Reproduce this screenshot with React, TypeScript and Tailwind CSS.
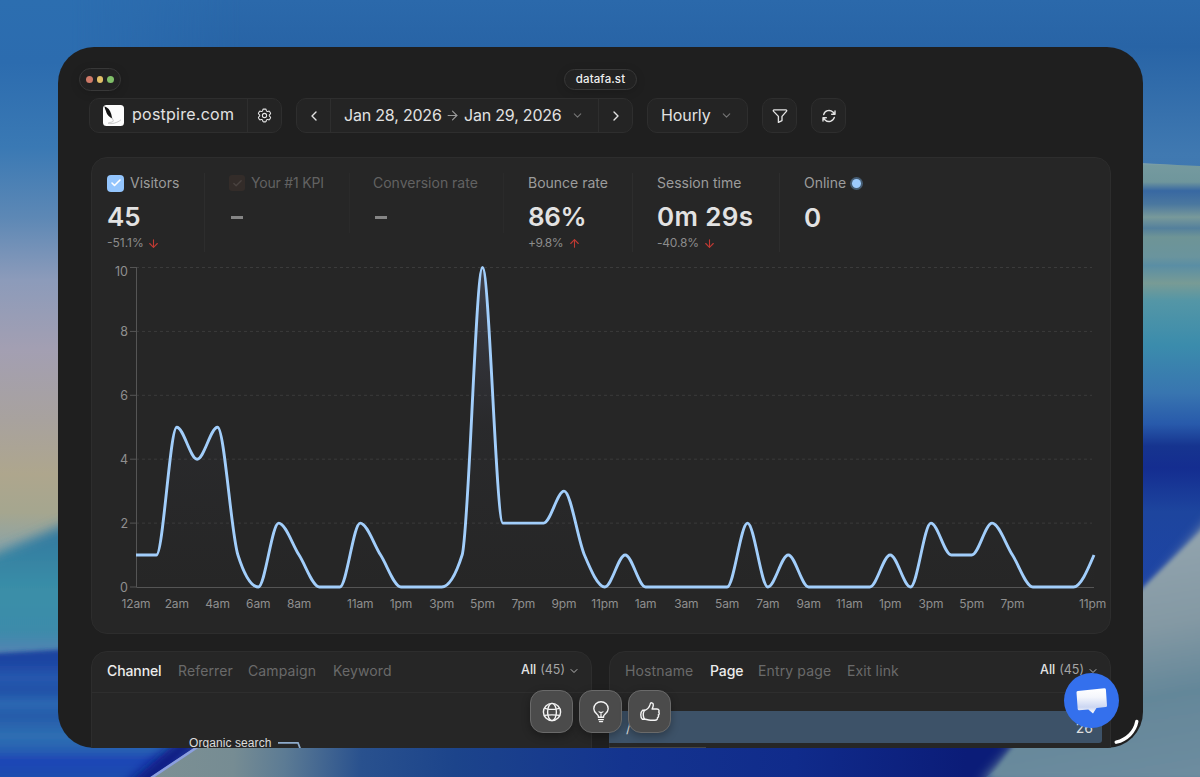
import React from "react";
import { ArrowDown, ArrowRight, ArrowUp, Check, ChevronDown, ChevronLeft, ChevronRight } from "lucide-react";
import { HiOutlineCog6Tooth } from "react-icons/hi2";

const VALUES = [
  1, 1, 5, 4, 5, 1, 0, 2, 1, 0, 0, 2, 1, 0, 0, 0, 1, 10, 2, 2, 2, 3, 1, 0,
  1, 0, 0, 0, 0, 0, 2, 0, 1, 0, 0, 0, 0, 1, 0, 2, 1, 1, 2, 1, 0, 0, 0, 1,
];
const TICKS = [0, 2, 4, 6, 8, 11, 13, 15, 17, 19, 21, 23, 25, 27, 29, 31, 33, 35, 37, 39, 41, 43, 47];

const LEFT = 44;
const RIGHT = 1002;
const BASE = 330;
const UNIT = 31.95;

function hourLabel(i: number) {
  const h = i % 24;
  return `${h % 12 === 0 ? 12 : h % 12}${h < 12 ? "am" : "pm"}`;
}

/** Monotone cubic interpolation through equally spaced points. */
function monotonePath(pts: [number, number][]) {
  const n = pts.length;
  const slope = (i: number) => (pts[i + 1][1] - pts[i][1]) / (pts[i + 1][0] - pts[i][0]);
  const t: number[] = new Array(n).fill(0);
  for (let i = 1; i < n - 1; i++) {
    const a = slope(i - 1);
    const b = slope(i);
    t[i] = (Math.sign(a) + Math.sign(b)) * Math.min(Math.abs(a), Math.abs(b), Math.abs((a + b) / 4)) || 0;
  }
  t[0] = (3 * slope(0) - t[1]) / 2;
  t[n - 1] = (3 * slope(n - 2) - t[n - 2]) / 2;
  let d = `M${pts[0][0]},${pts[0][1]}`;
  for (let i = 0; i < n - 1; i++) {
    const dx = (pts[i + 1][0] - pts[i][0]) / 3;
    d += `C${pts[i][0] + dx},${pts[i][1] + dx * t[i]},${pts[i + 1][0] - dx},${pts[i + 1][1] - dx * t[i + 1]},${pts[i + 1][0]},${pts[i + 1][1]}`;
  }
  return d;
}

const step = (RIGHT - LEFT) / 47;
const points = VALUES.map((v, i) => [LEFT + i * step, BASE - v * UNIT] as [number, number]);
const line = monotonePath(points);

function Wallpaper() {
  return (
    <svg className="absolute inset-0" width="1200" height="777" viewBox="0 0 1200 777">
      <defs>
        <linearGradient id="sky" x1="0" x2="0" y1="0" y2="1">
          <stop offset="0" stopColor="#2b69ab" />
          <stop offset="0.06" stopColor="#2864a6" />
          <stop offset="0.2" stopColor="#4079b1" />
          <stop offset="1" stopColor="#173a90" />
        </linearGradient>
        <linearGradient id="wl" gradientUnits="userSpaceOnUse" x1="0" x2="0" y1="0" y2="777">
          <stop offset="0" stopColor="#2c6eb0" />
          <stop offset="0.08" stopColor="#2c6caf" />
          <stop offset="0.19" stopColor="#3a79b4" />
          <stop offset="0.28" stopColor="#5d88b5" />
          <stop offset="0.36" stopColor="#8c9bba" />
          <stop offset="0.45" stopColor="#a39fb2" />
          <stop offset="0.54" stopColor="#a8a29e" />
          <stop offset="0.61" stopColor="#aea68d" />
          <stop offset="0.66" stopColor="#a5a68f" />
          <stop offset="0.7" stopColor="#8fa4a4" />
        </linearGradient>
        <linearGradient id="fade" gradientUnits="userSpaceOnUse" x1="70" x2="240" y1="0" y2="0">
          <stop offset="0" stopColor="#fff" />
          <stop offset="1" stopColor="#000" />
        </linearGradient>
        <mask id="leftEdge"><rect width="300" height="777" fill="url(#fade)" /></mask>
        <linearGradient id="teal" gradientUnits="userSpaceOnUse" x1="0" x2="0" y1="530" y2="652">
          <stop offset="0" stopColor="#33799f" />
          <stop offset="0.5" stopColor="#3a8fa8" />
          <stop offset="0.85" stopColor="#3c8baa" />
          <stop offset="1" stopColor="#5583b4" />
        </linearGradient>
        <linearGradient id="sea" gradientUnits="userSpaceOnUse" x1="0" x2="0" y1="650" y2="777">
          <stop offset="0" stopColor="#1b45a0" />
          <stop offset="0.08" stopColor="#1c44a2" />
          <stop offset="0.22" stopColor="#2658ae" />
          <stop offset="0.32" stopColor="#2151a8" />
          <stop offset="0.42" stopColor="#2b68b2" />
          <stop offset="0.52" stopColor="#265caa" />
          <stop offset="0.68" stopColor="#2e6fb3" />
          <stop offset="0.78" stopColor="#2861b2" />
          <stop offset="0.88" stopColor="#1d44b6" />
          <stop offset="1" stopColor="#1f50ae" />
        </linearGradient>
        <linearGradient id="wr" gradientUnits="userSpaceOnUse" x1="0" x2="0" y1="160" y2="600">
          <stop offset="0" stopColor="#8fabc0" />
          <stop offset="0.012" stopColor="#759a9f" />
          <stop offset="0.05" stopColor="#6f969c" />
          <stop offset="0.07" stopColor="#3868a2" />
          <stop offset="0.1" stopColor="#4a779f" />
          <stop offset="0.13" stopColor="#78999a" />
          <stop offset="0.155" stopColor="#54809c" />
          <stop offset="0.175" stopColor="#6e9496" />
          <stop offset="0.22" stopColor="#6a949d" />
          <stop offset="0.24" stopColor="#5a8ea4" />
          <stop offset="0.28" stopColor="#789b95" />
          <stop offset="0.32" stopColor="#5496a6" />
          <stop offset="0.42" stopColor="#3b8cac" />
          <stop offset="0.53" stopColor="#3875b0" />
          <stop offset="0.6" stopColor="#285aab" />
          <stop offset="0.65" stopColor="#16348f" />
          <stop offset="0.7" stopColor="#142d90" />
          <stop offset="0.8" stopColor="#1d459e" />
          <stop offset="1" stopColor="#1e44a6" />
        </linearGradient>
        <linearGradient id="slate" gradientUnits="userSpaceOnUse" x1="1120" x2="1160" y1="550" y2="777">
          <stop offset="0" stopColor="#91a3ad" />
          <stop offset="0.35" stopColor="#8499a4" />
          <stop offset="0.65" stopColor="#648799" />
          <stop offset="1" stopColor="#6d8c9f" />
        </linearGradient>
        <linearGradient id="floor" gradientUnits="userSpaceOnUse" x1="150" x2="1000" y1="0" y2="40">
          <stop offset="0" stopColor="#7f9294" />
          <stop offset="0.14" stopColor="#768c93" />
          <stop offset="0.2" stopColor="#5c7b94" />
          <stop offset="0.29" stopColor="#29518e" />
          <stop offset="0.4" stopColor="#1c448b" />
          <stop offset="0.6" stopColor="#14348f" />
          <stop offset="0.8" stopColor="#102b8b" />
          <stop offset="1" stopColor="#0b1c78" />
        </linearGradient>
        <filter id="b2" x="-20%" y="-20%" width="140%" height="140%"><feGaussianBlur stdDeviation="2" /></filter>
        <filter id="b6" x="-20%" y="-30%" width="140%" height="160%"><feGaussianBlur stdDeviation="6" /></filter>
      </defs>
      <rect width="1200" height="777" fill="url(#sky)" />
      <rect width="300" height="777" fill="url(#wl)" mask="url(#leftEdge)" />
      <path d="M-20 560 L90 514 V660 H-20Z" fill="url(#teal)" filter="url(#b6)" />
      <path d="M-20 654 L90 648 H250 V800 H-20Z" fill="url(#sea)" filter="url(#b2)" />
      <path d="M140 795 L215 730 L185 735 L115 795Z" fill="#08187f" filter="url(#b6)" />
      <path d="M145 781 L206 740 H1040 L980 781Z" fill="url(#floor)" />
      <path d="M148 780 L205 742" stroke="#8b9fe0" strokeWidth="2.6" />
      <path d="M1100 162 C1140 162 1170 165 1200 166 V600 H1100Z" fill="url(#wr)" />
      <path d="M1225 502 L980 784 H1225Z" fill="url(#slate)" filter="url(#b6)" />
      <path d="M1225 508 L1110 620 L990 777 H1225Z" fill="url(#slate)" filter="url(#b2)" />
    </svg>
  );
}

function Favicon() {
  return (
    <svg width="21" height="21" viewBox="0 0 21 21">
      <rect width="21" height="21" rx="3.5" fill="#fcfcfc" />
      <path d="M1.4 1.2C5 2.4 7 5 8.2 9L9.2 13.6C6.3 12 4 10 3.2 7C3.4 6.4 1.8 4 1.4 1.2Z" fill="#111" />
      <path d="M9 12.5L10.3 15.8C10.4 17.8 6 16.9 5.2 18.2C8 19.6 14.6 17.7 18 14.8" fill="none" stroke="#aaa" strokeWidth=".6" />
    </svg>
  );
}

function FunnelIcon() {
  return (
    <svg width="16" height="16" viewBox="0 0 16 16" fill="none" stroke="currentColor" strokeWidth="1.35" strokeLinejoin="round">
      <path d="M2.2 1.8H13.8C14.8 1.8 15 2.7 14.4 3.4L10 8.4V12.6L6.4 14.4V8.4L1.6 3.4C1 2.7 1.2 1.8 2.2 1.8Z" />
    </svg>
  );
}

function RefreshIcon() {
  return (
    <svg width="16" height="16" viewBox="0 0 24 24" fill="none" stroke="currentColor" strokeWidth="2.1" strokeLinecap="round" strokeLinejoin="round">
      <path d="M16.023 9.348h4.992V4.356M2.985 19.644v-4.992h4.992M2.985 14.652l3.181 3.183a8.25 8.25 0 0 0 13.803-3.7M4.031 9.865a8.25 8.25 0 0 1 13.803-3.7l3.181 3.182" />
    </svg>
  );
}

function GlobeIcon() {
  return (
    <svg width="20" height="20" viewBox="0 0 20 20" fill="none" stroke="#f4f4f4" strokeWidth="1.4">
      <circle cx="10" cy="10" r="8.6" />
      <ellipse cx="10" cy="10" rx="4.4" ry="8.6" />
      <path d="M2.6 6C5 7.8 15 7.8 17.4 6M2.2 13.4C5 12.6 15 12.6 17.8 13.4" strokeWidth="1.3" />
    </svg>
  );
}

function BulbIcon() {
  return (
    <svg width="18" height="22" viewBox="0 0 18 22" fill="none" stroke="#f4f4f4" strokeWidth="1.4" strokeLinecap="round" strokeLinejoin="round">
      <path d="M6.4 16.3V15.1C6.2 13.3 1.8 12 1.8 7.8A7.2 7 0 0 1 16.2 7.8C16.2 12 11.8 13.3 11.6 15.1V16.3Z" />
      <path d="M9 16V11.3M7 10.8C7.6 11.8 10.4 11.8 11 10.8M6.6 18.6H11.4M7.4 20.6H10.6" strokeWidth="1.2" />
    </svg>
  );
}

function ThumbIcon() {
  return (
    <svg width="22" height="22" viewBox="0 0 22 22" fill="none" stroke="#f4f4f4" strokeWidth="1.4" strokeLinecap="round" strokeLinejoin="round">
      <path d="M5.4 9.5C8.4 8.4 10.5 6 11.1 3.4C11.4 1.2 14.4 1.2 14.3 4C14.2 5.8 13.6 6.8 13.1 8H18C20.2 8 20.6 10.2 19.6 11C20.7 11.8 20.3 13.5 19.3 13.9C19.9 14.9 19.5 16.2 18.5 16.6C18.7 18.2 17.7 19.2 16 19.2H11.5C8.8 19.2 7.2 18.2 5.2 18" />
      <path d="M5.4 9.2H3.6C1.2 11.2 1.2 16.3 3.4 18.3H5.6C4 15.6 4 12 5.4 9.2Z" />
    </svg>
  );
}

function Chart() {
  return (
    <svg className="block" width="1018" height="365" viewBox="0 0 1018 365">
      <defs>
        <linearGradient id="area" gradientUnits="userSpaceOnUse" x1="0" x2="0" y1="10" y2={BASE}>
          <stop offset="0" stopColor="#6a6d86" stopOpacity="0.38" />
          <stop offset="0.5" stopColor="#50556e" stopOpacity="0.08" />
          <stop offset="1" stopColor="#50556e" stopOpacity="0" />
        </linearGradient>
      </defs>
      {[2, 4, 6, 8, 10].map((v) => (
        <path key={v} d={`M${LEFT} ${BASE - v * UNIT}H1000`} stroke="#3b3b3b" strokeWidth="1" strokeDasharray="3 3" />
      ))}
      {[0, 2, 4, 6, 8, 10].map((v) => (
        <g key={v}>
          <path d={`M${LEFT - 6} ${BASE - v * UNIT}H${LEFT}`} stroke="#555" />
          <text x={LEFT - 8} y={BASE - v * UNIT + (v === 10 ? 8.3 : 4.6)} textAnchor="end" className="fill-[#8f8f8f] text-[12.5px]">{v}</text>
        </g>
      ))}
      <path d={`M${LEFT + 0.5} 10V${BASE + 0.5}H${RIGHT}`} fill="none" stroke="#555" />
      <path d={`${line}V${BASE}H${LEFT}Z`} fill="url(#area)" />
      <path d={line} fill="none" stroke="#a2cefb" strokeWidth="2.9" />
      {TICKS.map((i) => (
        <text key={i} x={LEFT + i * step - (i === 47 ? 1.5 : 0)} y="350.5" textAnchor="middle" className="fill-[#8f8f8f] text-[12px] tracking-[-0.1px]">
          {hourLabel(i)}
        </text>
      ))}
    </svg>
  );
}

function Tabs({ items, active }: { items: [string, string][]; active: string }) {
  return (
    <div className="flex h-[41px] shrink-0 items-center border-b border-[#2e2e2e] pr-[11px] pb-[3px] pl-[15px] text-[14px]">
      {items.map(([label, width]) => (
        <span key={label} className={`${width} shrink-0 whitespace-nowrap ${label === active ? "font-medium tracking-[-0.1px] text-[#ececec]" : "tracking-[0.13px] text-[#6a6a6a]"}`}>
          {label}
        </span>
      ))}
      <span className="ml-auto flex items-center text-[12.5px] font-medium text-[#e4e4e4]">
        All<span className="ml-1 font-normal text-[#a5a5a5]">(45)</span>
        <ChevronDown className="mt-px ml-[3px]" size={12} strokeWidth={2} color="#b5b5b5" />
      </span>
    </div>
  );
}

const box = "flex h-[35px] items-center rounded-[10px] border border-[#2e2e2e] bg-[#242424]";
const pill = "flex items-center justify-center rounded-full border border-[#383838] bg-[#222] shadow-[0_2px_10px_rgba(0,0,0,0.15)]";
const label = "flex h-5 items-center text-[14px] whitespace-nowrap";
const labelText = "-mt-[2px]";
const figure = "mt-[8px] flex h-8 items-center text-[26px] font-semibold leading-8 text-[#e2e2e2]";
const delta = "flex h-5 items-center text-[12px] text-[#8c8c8c]";
const dock = "flex h-[43px] w-[43px] items-center justify-center rounded-[13px] border border-[#6a6a6a] bg-[#4b4b4b] shadow-[0_3px_8px_rgba(0,0,0,0.3)]";

export default function App() {
  return (
    <div className="relative h-[777px] w-[1200px] overflow-hidden bg-[#2b69ab] pt-[47px] pl-[58px] font-['Inter',sans-serif]">
      <Wallpaper />
      <div className="relative flex h-[701px] w-[1085px] flex-col overflow-hidden rounded-[36px] bg-[#1f1f1f] pt-[21px] pr-8 pl-[33px]">
        <div className="flex h-[23px] items-center">
          <div className={`${pill} -ml-3 h-[23px] w-[42px] gap-[4px]`}>
            <i className="h-[6.5px] w-[6.5px] rounded-full bg-[#cf7a68]" />
            <i className="h-[6.5px] w-[6.5px] rounded-full bg-[#e2bf68]" />
            <i className="h-[6.5px] w-[6.5px] rounded-full bg-[#80c069]" />
          </div>
          <div className={`${pill} ml-[443px] h-[21px] w-[73px] text-[11.5px] font-medium tracking-[0.1px] text-[#efefef]`}>datafa.st</div>
        </div>

        <div className="mt-[7px] -ml-[2px] flex text-[16px] text-[#e2e2e2]">
          <div className={`${box} w-[193px]`}>
            <div className="flex h-full w-[158px] items-center border-r border-[#2e2e2e] pl-[13px]">
              <Favicon />
              <span className="-mt-[3px] ml-2 tracking-[0.25px]">postpire.com</span>
            </div>
            <div className="flex flex-1 justify-center"><HiOutlineCog6Tooth size={17} /></div>
          </div>
          <div className={`${box} ml-[14px] w-[337px]`}>
            <div className="flex h-full w-[34px] items-center justify-center border-r border-[#2e2e2e]"><ChevronLeft size={16} strokeWidth={2.1} /></div>
            <div className="flex h-full w-[268px] items-center border-r border-[#2e2e2e] pl-[13px] whitespace-nowrap">
              <span className="-mt-[2px] w-[101px] tracking-[-0.2px]">Jan 28, 2026</span>
              <ArrowRight className="mr-[4px] shrink-0" size={15} strokeWidth={1.8} color="#9a9a9a" />
              <span className="-mt-[2px] w-[107px] tracking-[-0.2px]">Jan 29, 2026</span>
              <ChevronDown size={13} color="#757575" />
            </div>
            <div className="flex flex-1 justify-center"><ChevronRight size={16} strokeWidth={2.1} /></div>
          </div>
          <div className={`${box} ml-[14px] w-[101px] pl-[13px]`}>
            <span className="-mt-[2px] w-[59px] tracking-[-0.1px]">Hourly</span>
            <ChevronDown size={13} color="#757575" />
          </div>
          <div className={`${box} ml-[14px] w-[35px] justify-center`}><FunnelIcon /></div>
          <div className={`${box} ml-[14px] w-[35px] justify-center`}><RefreshIcon /></div>
        </div>

        <div className="mt-6 flex h-[477px] shrink-0 flex-col rounded-[16px] border border-[#2d2d2d] bg-[#262626]">
          <div className="flex h-[99px] pt-[15px] pl-[15px] text-[#9c9c9c]">
            <div className="h-[79px] w-[98px] border-r border-[#2d2d2d]">
              <div className={label}>
                <span className="mr-[6px] flex h-[17px] w-[17px] items-center justify-center rounded-[4px] bg-[#93c5fd]"><Check size={12} strokeWidth={3.2} color="#fff" /></span>
                <span className={labelText}>Visitors</span>
              </div>
              <div className={figure}>45</div>
              <div className={delta}>-51.1%<ArrowDown className="ml-[3px]" size={13} color="#c03a33" /></div>
            </div>
            <div className="h-[60px] w-[145px] border-r border-[#2a2a2a] pl-6 text-[#626262]">
              <div className={label}>
                <span className="mr-[6px] flex h-[16px] w-[16px] items-center justify-center rounded-[3px] bg-[#332c29]"><Check size={11} strokeWidth={3} color="#4a4340" /></span>
                <span className={`${labelText} tracking-[-0.2px]`}>Your #1 KPI</span>
              </div>
              <div className="mt-[8px] flex h-8 items-center pl-[2px]"><span className="h-[3px] w-3 bg-[#858585]" /></div>
            </div>
            <div className="h-[60px] w-[154px] border-r border-[#2a2a2a] pl-[23px] text-[#626262]">
              <div className={label}><span className={labelText}>Conversion rate</span></div>
              <div className="mt-[8px] flex h-8 items-center pl-[2px]"><span className="h-[3px] w-3 bg-[#858585]" /></div>
            </div>
            <div className="h-[79px] w-[129px] border-r border-[#2d2d2d] pl-6">
              <div className={label}><span className={labelText}>Bounce rate</span></div>
              <div className={`${figure} tracking-[-0.4px]`}>86%</div>
              <div className={`${delta} tracking-[-0.5px]`}>+9.8%<ArrowUp className="ml-[5px]" size={13} color="#c03a33" /></div>
            </div>
            <div className="h-[79px] w-[147px] border-r border-[#2d2d2d] pl-6">
              <div className={label}><span className={labelText}>Session time</span></div>
              <div className={`${figure} tracking-[0.35px] whitespace-nowrap`}>0m 29s</div>
              <div className={`${delta} tracking-[-0.2px]`}>-40.8%<ArrowDown className="ml-[4px]" size={13} color="#c03a33" /></div>
            </div>
            <div className="pl-6">
              <div className={label}><span className={labelText}>Online</span><span className="ml-[6px] h-[9px] w-[9px] rounded-full bg-[#9dccff] ring-2 ring-[#455c72]" /></div>
              <div className={`${figure} pt-[2px] tracking-[0.5px]`}>0</div>
            </div>
          </div>
          <Chart />
        </div>

        <div className="mt-[17px] flex h-[97px] shrink-0 gap-[17px]">
          <div className="flex h-[120px] w-[501px] flex-col rounded-t-[16px] border border-[#2d2d2d] bg-[#262626]">
            <Tabs active="Channel" items={[["Channel", "w-[71px]"], ["Referrer", "w-[70px]"], ["Campaign", "w-[85px]"], ["Keyword", "w-[70px]"]]} />
            <div className="flex pt-[43px] pl-[97px] text-[12px] leading-[15px] text-[#dcdcdc] font-['Liberation_Sans',sans-serif]">
              <span className="tracking-[0.08px] whitespace-nowrap">Organic search</span>
              <svg className="ml-[6px]" width="26" height="20" viewBox="0 0 26 20"><path d="M0 6.8H20L25 20" fill="none" stroke="#8eabcb" strokeWidth="1.8" /></svg>
            </div>
          </div>
          <div className="flex h-[120px] w-[502px] flex-col rounded-t-[16px] border border-[#2d2d2d] bg-[#262626]">
            <Tabs active="Page" items={[["Hostname", "w-[85px]"], ["Page", "w-[48px]"], ["Entry page", "w-[89px]"], ["Exit link", "w-[70px]"]]} />
            <div className="mt-[18px] mr-2 -ml-px flex h-8 shrink-0 items-center justify-between rounded-r-[3px] bg-[#3d5268] pr-[9px] pl-[17px] text-[14px] text-[#dedede]"><span>/</span><span>26</span></div>
            <div className="mt-[4px] -ml-px h-8 w-[97px] shrink-0 bg-[#464646]" />
          </div>
        </div>
        <svg className="absolute right-0 bottom-0" width="34" height="34" viewBox="0 0 34 34"><path d="M27.8 7.5C25.8 17.8 18 25.5 7.2 28.2" fill="none" stroke="#fff" strokeWidth="3.4" strokeLinecap="round" /></svg>
      </div>

      <div className="absolute top-[690px] left-[530px] flex gap-[6px]">
        <div className={dock}><GlobeIcon /></div>
        <div className={dock}><BulbIcon /></div>
        <div className={dock}><ThumbIcon /></div>
      </div>
      <div className="absolute top-[673px] left-[1064px] flex h-[55px] w-[55px] items-center justify-center rounded-full bg-[#3470ed]">
        <svg width="33" height="28" viewBox="0 0 33 28">
          <defs><linearGradient id="msg" x1="0" x2="0" y1="0" y2="1"><stop offset="0" stopColor="#fff" /><stop offset="0.35" stopColor="#f4f6fc" /><stop offset="0.75" stopColor="#cbd6f2" /><stop offset="1" stopColor="#fff" /></linearGradient></defs>
          <path d="M2.8 4.1L29.3 1.3Q30.7 1.2 30.9 2.6L32 18.5Q32.1 20 30.7 20.1L21.5 21L18 26.5L13.3 22.5L4.2 23.2Q2.8 23.3 2.7 21.9L1.5 5.6Q1.4 4.2 2.8 4.1Z" fill="url(#msg)" />
        </svg>
      </div>
    </div>
  );
}
